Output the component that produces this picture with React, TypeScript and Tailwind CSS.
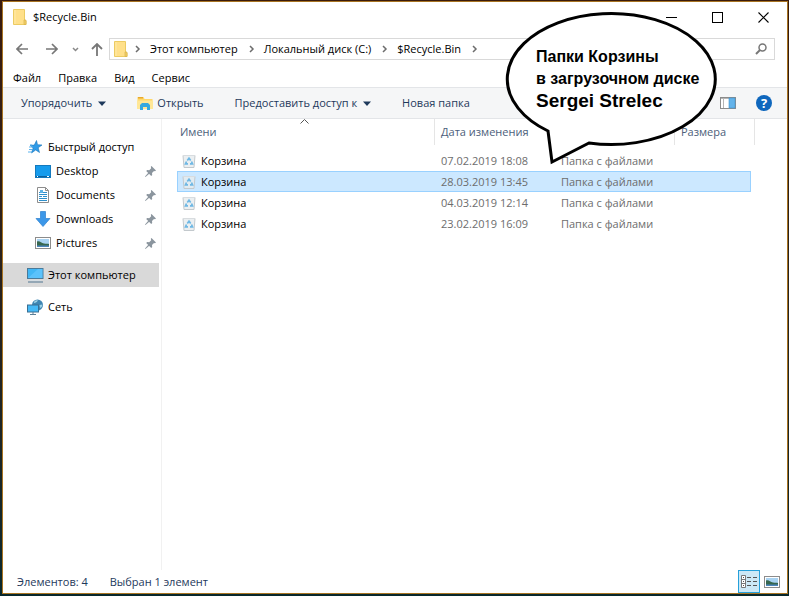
import type { ReactNode } from 'react';

interface FileRow {
  name: string;
  date: string;
  type: string;
  selected?: boolean;
}

const files: FileRow[] = [
  { name: 'Корзина', date: '07.02.2019 18:08', type: 'Папка с файлами' },
  { name: 'Корзина', date: '28.03.2019 13:45', type: 'Папка с файлами', selected: true },
  { name: 'Корзина', date: '04.03.2019 12:14', type: 'Папка с файлами' },
  { name: 'Корзина', date: '23.02.2019 16:09', type: 'Папка с файлами' },
];

const crumbs = ['Этот компьютер', 'Локальный диск (C:)', '$Recycle.Bin'];

function FolderIcon() {
  return (
    <svg width="14" height="16" viewBox="0 0 14 16" className="shrink-0">
      <path d="M.5.5h11v10.500l1.500 1v3.500H.5z" fill="#ffe08a" stroke="#eccb62" />
      <path d="M11 11v4.500h2V11z" fill="#f2cf68" stroke="#d9b24a" strokeWidth=".7" />
      <path d="M2 1v14" stroke="#ffeaa8" />
    </svg>
  );
}

function Chevron() {
  return (
    <svg width="6" height="8" viewBox="0 0 6 8" fill="none" stroke="#6d6d6d" strokeWidth="1.500" className="shrink-0">
      <path d="M1 1l3 3-3 3" />
    </svg>
  );
}

function Caret() {
  return (
    <svg width="8" height="5" viewBox="0 0 8 5">
      <path d="M0 .5h8L4 5z" fill="#1e395b" />
    </svg>
  );
}

function OpenIcon() {
  return (
    <svg width="16" height="15" viewBox="0 0 16 15">
      <path d="M.5 1h6l1 2H15.500v10H.5z" fill="#ffd86b" />
      <path d="M0 4.500h16V13H0z" fill="#ffe797" />
      <path d="M1 1h5v1.500H1z" fill="#e9a92c" />
      <path d="M3 14V9l2-2h6l2 2v5h-3v-3H6v3z" fill="#35a8e0" />
    </svg>
  );
}

function StarIcon() {
  return (
    <svg width="16" height="14" viewBox="0 0 16 14">
      <path d="M9.500.5l1 4.200 4.500.3-3.800 2.700 1.300 4.800L8.700 10 4.500 13l1.600-5L3 5.300l4.300-.2z" fill="#2f9be8" stroke="#1a74b8" strokeWidth=".6" />
      <path d="M3 5h2M2 7h4M2 9.500h3M1 12h4" stroke="#5bb3ee" />
    </svg>
  );
}

function DesktopIcon() {
  return (
    <svg width="16" height="13" viewBox="0 0 16 13">
      <rect x=".5" y=".5" width="15" height="12" fill="#169bec" stroke="#1479bd" />
      <path d="M1 11.500h14" stroke="#0d5f9b" />
      <path d="M2 11.500h1M12 11.500h2" stroke="#fff" />
    </svg>
  );
}

function DocumentIcon() {
  return (
    <svg width="16" height="16" viewBox="0 0 16 16">
      <path d="M2.500.5h8l3 3v12h-11z" fill="#fff" stroke="#8d8d8d" />
      <path d="M10.500.5v3h3" fill="none" stroke="#8d8d8d" />
      <path d="M4 5.500h3M8 5.500h4M4 7.500h8M4 9.500h3M8 9.500h4M4 11.500h8M4 13.500h8" stroke="#2e8fcb" />
      <path d="M5 3h3v3H5z" fill="#5eb2e4" />
    </svg>
  );
}

function DownloadIcon() {
  return (
    <svg width="16" height="16" viewBox="0 0 16 16">
      <path d="M5.500.5h5v7h4.500L8 15.500 1 7.500h4.500z" fill="#3c97e8" stroke="#2b7fce" strokeWidth=".7" />
    </svg>
  );
}

function PictureIcon() {
  return (
    <svg width="16" height="12" viewBox="0 0 16 12">
      <rect x=".5" y=".5" width="15" height="11" fill="#fff" stroke="#8c8c8c" />
      <path d="M2 2h12v8H2z" fill="#a9d3f2" />
      <path d="M2 4.500c3-1 4 1.500 7 2 2 .3 4 0 5 .5v2H2z" fill="#37674f" />
      <path d="M2 8.500h12V10H2z" fill="#4d86bd" />
    </svg>
  );
}

function ComputerIcon() {
  return (
    <svg width="17" height="16" viewBox="0 0 17 16">
      <rect x=".5" y="1.500" width="15.500" height="10" fill="#42b7f5" stroke="#4a7a99" />
      <path d="M1 11L11 2h4.500v9z" fill="#6ccaff" opacity=".6" />
      <path d="M1 15h15" stroke="#7d96a8" strokeWidth="1.500" />
      <path d="M3 13.500h11" stroke="#d5dde3" />
    </svg>
  );
}

function NetworkIcon() {
  return (
    <svg width="17" height="16" viewBox="0 0 17 16">
      <circle cx="10.500" cy="6" r="5.500" fill="#3f86b3" />
      <path d="M7.500 2c1.500-1.200 3.500-.8 3.500-.8S9.500 4 7 4zM12.500 6l2.800-.5c.3 1.500-.8 3-2.300 3.500z" fill="#9fd3e6" />
      <rect x=".5" y="6" width="11" height="7" fill="#45b9f6" stroke="#3a6f92" />
      <path d="M6 13v2M3 15.500h6" stroke="#5b7f97" />
    </svg>
  );
}

function PinIcon() {
  return (
    <svg width="11" height="11" viewBox="0 0 11 11" fill="#8b959e">
      <path d="M6.500 0L11 4.500l-1 .7-1-.2-2 2 .2 2-1 1L1.200 5l1-1 2 .2 2-2L5.800.8z" />
      <path d="M3.500 6.500l1 1L.5 11 0 10.500z" />
    </svg>
  );
}

function BinIcon() {
  return (
    <svg width="14" height="14" viewBox="0 0 14 14" className="shrink-0">
      <path d="M1 1.500h12l-1 12H2z" fill="#e6ebee" fillOpacity=".8" stroke="#c3c9cd" />
      <path d="M1 1.500h12" stroke="#d8dcdf" />
      <path d="M5.300 6.500L7 4.200l1.700 2.300M9.500 7.500l1 2.300H8M6 9.800H3.500l1-2.300" fill="none" stroke="#6fb8e4" strokeWidth="1.700" />
    </svg>
  );
}

interface NavItemProps {
  icon: ReactNode;
  label: string;
  pinned?: boolean;
}

function NavItem({ icon, label, pinned }: NavItemProps) {
  return (
    <button className="flex h-6 w-full items-center pl-8 pr-[5px] text-left">
      <span className="flex w-4 justify-center">{icon}</span>
      <span className="ml-[5px] flex-1">{label}</span>
      {pinned && <PinIcon />}
    </button>
  );
}

function TitleBar() {
  return (
    <header className="flex h-[30px] items-center pl-[10px] pr-[18px]">
      <FolderIcon />
      <h1 className="ml-[6px] flex-1">$Recycle.Bin</h1>
      <div className="flex items-center gap-[35px]">
        <button aria-label="Свернуть">
          <svg width="11" height="11" className="block"><path d="M0 5.500h11" stroke="#000" /></svg>
        </button>
        <button aria-label="Развернуть">
          <svg width="11" height="11" className="block"><rect x=".5" y=".5" width="10" height="10" fill="none" stroke="#000" /></svg>
        </button>
        <button aria-label="Закрыть">
          <svg width="11" height="11" className="block"><path d="M.5.5l10 10M10.500.5l-10 10" stroke="#000" strokeWidth="1.100" /></svg>
        </button>
      </div>
    </header>
  );
}

function AddressBar() {
  return (
    <div className="mt-[6px] flex h-[22px] items-center pl-[13px] pr-3">
      <nav className="flex items-center" aria-label="Переходы">
        <button aria-label="Назад">
          <svg width="12" height="12" fill="none" stroke="#777" strokeWidth="1.700" className="block"><path d="M12 6H1M6 1L1 6l5 5" /></svg>
        </button>
        <button aria-label="Вперёд" className="ml-[18px]">
          <svg width="12" height="12" fill="none" stroke="#777" strokeWidth="1.700" className="block"><path d="M0 6h11M6 1l5 5-5 5" /></svg>
        </button>
        <button aria-label="Последние расположения" className="ml-[14px]">
          <svg width="7" height="5" fill="none" stroke="#888" strokeWidth="1.500" className="block"><path d="M1 1l2.500 2.500L6 1" /></svg>
        </button>
        <button aria-label="Вверх" className="ml-3">
          <svg width="12" height="13" fill="none" stroke="#777" strokeWidth="1.800" className="block"><path d="M6 13V1M1 6l5-5 5 5" /></svg>
        </button>
      </nav>
      <div className="ml-[6px] flex h-full flex-1 items-center border border-[#d9d9d9] pl-1">
        <FolderIcon />
        <span className="ml-[7px]"><Chevron /></span>
        {crumbs.map((crumb) => (
          <span key={crumb} className="ml-[9px] flex items-center gap-[11px]">
            <button className="whitespace-nowrap">{crumb}</button>
            <Chevron />
          </span>
        ))}
      </div>
      <label className="ml-3 flex h-full w-[180px] items-center border border-[#d9d9d9] pr-[7px]">
        <input type="search" aria-label="Поиск" className="w-0 flex-1 outline-none" />
        <svg width="12" height="12" fill="none" stroke="#777" strokeWidth="1.500">
          <circle cx="7.500" cy="4.500" r="3.500" />
          <path d="M5 7L1 11" strokeWidth="2" />
        </svg>
      </label>
    </div>
  );
}

function Toolbar() {
  return (
    <div className="flex h-8 items-center border-y border-y-[#e3e5e8] bg-[#f5f6f7] pl-[18px] pr-[15px] text-[#1e395b]">
      <button className="flex items-center gap-[6px]">Упорядочить <Caret /></button>
      <button className="ml-[31px] flex items-center gap-1"><OpenIcon /> Открыть</button>
      <button className="ml-[31px] flex items-center gap-[6px]">Предоставить доступ к <Caret /></button>
      <button className="ml-[31px]">Новая папка</button>
      <span className="flex-1" />
      <button aria-label="Область просмотра">
        <svg width="16" height="12" className="block">
          <rect x=".5" y=".5" width="15" height="11" fill="#fff" stroke="#8b8b8b" />
          <path d="M3.500 1v10M1 1.500h14" stroke="#b5b5b5" />
          <path d="M9 1h6v10H9z" fill="#63b3ea" stroke="#3e94d0" strokeWidth=".6" />
        </svg>
      </button>
      <button aria-label="Справка" className="ml-5 flex size-4 items-center justify-center rounded-full bg-[#0f67bd] text-[13px] font-bold leading-4 text-white">?</button>
    </div>
  );
}

function Sidebar() {
  return (
    <aside className="w-[159px] shrink-0 border-r border-[#f1f1f1] pt-4">
      <button className="flex h-6 w-full items-center pl-6">
        <StarIcon />
        <span className="ml-[5px]">Быстрый доступ</span>
      </button>
      <NavItem icon={<DesktopIcon />} label="Desktop" pinned />
      <NavItem icon={<DocumentIcon />} label="Documents" pinned />
      <NavItem icon={<DownloadIcon />} label="Downloads" pinned />
      <NavItem icon={<PictureIcon />} label="Pictures" pinned />
      <button className="mt-2 flex h-6 w-[156px] items-center bg-[#d9d9d9] pl-6">
        <ComputerIcon />
        <span className="ml-1">Этот компьютер</span>
      </button>
      <button className="mt-2 flex h-6 w-full items-center pl-6">
        <NetworkIcon />
        <span className="ml-1">Сеть</span>
      </button>
    </aside>
  );
}

function FileTable() {
  return (
    <main className="min-w-0 flex-1 pl-[15px]">
      <table className="w-[578px] table-fixed border-separate border-spacing-0 text-left">
        <colgroup>
          <col className="w-[258px]" />
          <col className="w-[120px]" />
          <col className="w-[120px]" />
          <col className="w-[76px]" />
          <col className="w-1" />
        </colgroup>
        <thead>
          <tr className="h-[26px] text-[#4c607a]">
            <th className="relative border-r border-[#e5e5e5] pl-[3px] font-normal">
              Имени
              <svg width="9" height="5" fill="none" stroke="#555" className="absolute left-[123px] top-0"><path d="M.5 4.500l4-4 4 4" /></svg>
            </th>
            <th className="whitespace-nowrap border-r border-[#e5e5e5] pl-[6px] font-normal">Дата изменения</th>
            <th className="border-r border-[#e5e5e5] pl-[6px] font-normal">Тип</th>
            <th className="pl-[6px] font-normal">Размера</th>
            <td className="border-r border-[#e5e5e5]" />
          </tr>
          <tr className="h-[5px]"><td colSpan={5} /></tr>
        </thead>
        <tbody>
          {files.map((f) => {
            const cell = f.selected ? 'h-[21px] p-0 border-y border-[#99d1ff] bg-[#cce8ff]' : 'h-[21px] p-0';
            return (
              <tr key={f.date} className="text-[#6d6d6d]">
                <td className={f.selected ? `${cell} border-l` : cell}>
                  <span className={f.selected ? 'flex items-center pl-1 text-black' : 'flex items-center pl-[5px] text-black'}>
                    <BinIcon />
                    <span className="ml-[5px]">{f.name}</span>
                  </span>
                </td>
                <td className={cell}><span className="whitespace-nowrap pl-[6px]">{f.date}</span></td>
                <td className={cell}><span className="whitespace-nowrap pl-[6px]">{f.type}</span></td>
                <td className={f.selected ? `${cell} border-r` : cell} />
                <td />
              </tr>
            );
          })}
        </tbody>
      </table>
    </main>
  );
}

function StatusBar() {
  return (
    <footer className="flex h-[23px] items-center pl-[14px] pr-[7px] text-[#1e395b]">
      <span>Элементов: 4</span>
      <span className="ml-[22px]">Выбран 1 элемент</span>
      <span className="flex-1" />
      <button aria-label="Таблица" className="flex h-full w-[22px] items-center justify-center border border-[#26a0da] bg-[#cce8f6]">
        <svg width="16" height="13" fill="none" stroke="#777">
          <path d="M.5.5h4v12h-4zM.5 4.500h4M.5 8.500h4" fill="#fff" />
          <path d="M2 2.500h1M2 6.500h1M2 10.500h1M6 2.500h4M12 2.500h4M6 6.500h4M12 6.500h4M6 10.500h4M12 10.500h4" stroke="#555" />
        </svg>
      </button>
      <button aria-label="Крупные значки" className="ml-1"><PictureIcon /></button>
    </footer>
  );
}

function Balloon() {
  return (
    <div className="absolute left-[503px] top-[10px] h-[156px] w-[214px]">
      <svg width="214" height="156" className="absolute inset-0">
        <path
          d="M86 133A104 65.500 0 1 0 45 121L49 152Z"
          fill="#fff"
          stroke="#000"
          strokeWidth="3"
        />
      </svg>
      <p className="relative whitespace-nowrap pl-[33px] pt-9 font-['Liberation_Sans',Arial,sans-serif] text-[16px] font-bold leading-[22px] text-black">
        Папки Корзины
        <br />
        в загрузочном диске
        <br />
        <span className="text-[19px]">Sergei Strelec</span>
      </p>
    </div>
  );
}

export default function App() {
  return (
    <div className="relative flex min-h-screen flex-col bg-linear-to-b from-[#3a1a0c] to-[#08272c] pb-[2px] pl-[2px] pr-px pt-px font-['Open_Sans','Noto_Sans',sans-serif] text-[11px] leading-4 text-black">
      <div className="flex flex-1 flex-col border border-[#a87422] bg-white">
        <TitleBar />
        <AddressBar />
        <div className="flex h-[27px] items-center gap-[17px] pl-[10px] pt-2">
          <button>Файл</button>
          <button>Правка</button>
          <button>Вид</button>
          <button>Сервис</button>
        </div>
        <Toolbar />
        <div className="flex flex-1">
          <Sidebar />
          <FileTable />
        </div>
        <StatusBar />
      </div>
      <Balloon />
    </div>
  );
}
